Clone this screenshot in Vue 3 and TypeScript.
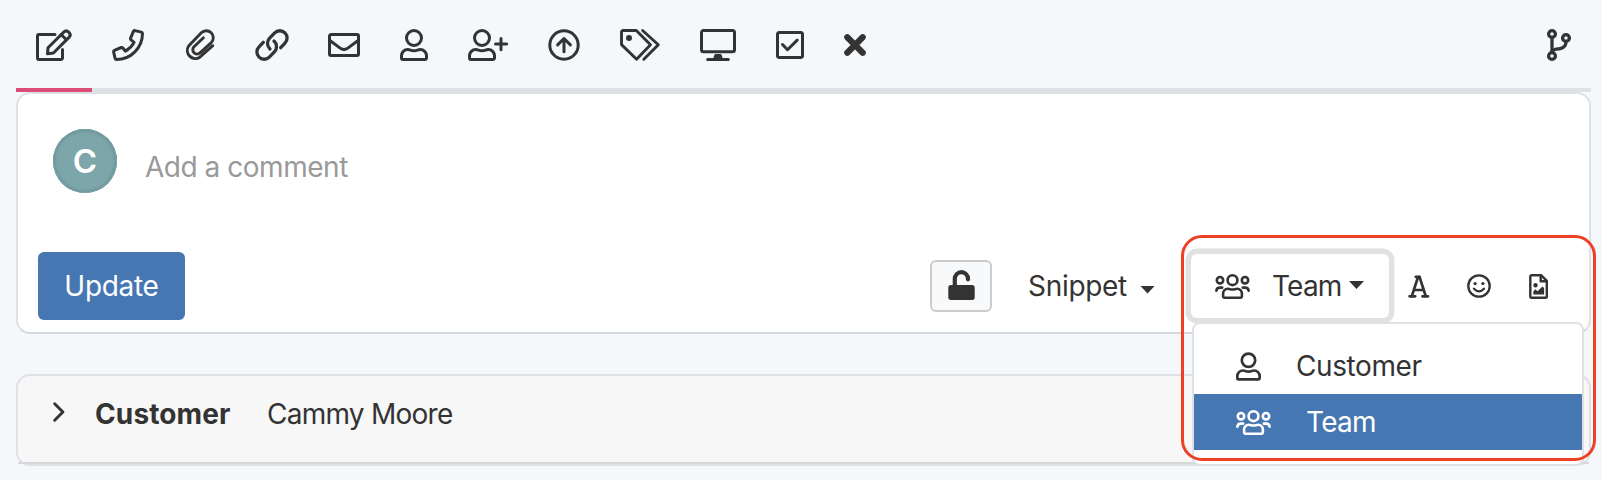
<script setup lang="ts">
import { ref } from 'vue'

interface Glyph {
  w: number
  h: number
  sw: number
  lines: string[]
  fills?: string[]
}

const circle = (cx: number, cy: number, r: number): string =>
  `M${cx - r} ${cy}a${r} ${r} 0 1 0 ${2 * r} 0a${r} ${r} 0 1 0 ${-2 * r} 0z`

const userBody =
  'M7.8 20.5c2.5 0 3 1.2 6.2 1.2s3.7-1.2 6.2-1.2a6.3 6.3 0 0 1 6.3 6.3V29a1.5 1.5 0 0 1-1.5 1.5H3A1.5 1.5 0 0 1 1.5 29v-2.2a6.3 6.3 0 0 1 6.3-6.3z'

const tools: Record<string, Glyph> = {
  edit: {
    w: 36, h: 32, sw: 3,
    lines: [
      'M19 5.5H3A1.5 1.5 0 0 0 1.5 7v22A1.5 1.5 0 0 0 3 30.5h22a1.5 1.5 0 0 0 1.5-1.5v-8.5',
      'M12 18.8 28 2.9a3.2 3.2 0 0 1 4.4 0l.8.8a3.2 3.2 0 0 1 0 4.4L17.4 24l-5.9.7z',
      'M25.3 5.7l5.1 5.1',
    ],
  },
  phone: {
    w: 32, h: 32, sw: 3,
    lines: [
      'M22.9 1.6l6.5 1.5q1.1.3 1.1 1.5A26 26 0 0 1 4.6 30.5q-1.2 0-1.5-1.1L1.6 22.9q-.2-1.1.8-1.5l6.9-2.9q.8-.3 1.4.3l2.7 3.3a21 21 0 0 0 8.7-8.7l-3.3-2.7q-.6-.6-.3-1.4l2.9-6.9q.4-1 1.5-.8z',
    ],
  },
  attach: {
    w: 32, h: 32, sw: 2.9,
    lines: [
      'M28.8 16.7 15.8 28.2A8.1 8.1 0 0 1 4.6 17L17.3 3.8a7 7 0 0 1 10 9.8L16 23.8a4.2 4.2 0 0 1-6-6l9.4-9',
    ],
  },
  link: {
    w: 32, h: 32, sw: 3.3,
    lines: [
      'M14 20a7.6 7.6 0 0 1-.6-10.7l5.3-5.4a7.2 7.2 0 0 1 10.3 10.2l-4.3 4.6',
      'M18 12a7.6 7.6 0 0 1 .6 10.7l-5.3 5.4A7.2 7.2 0 0 1 3 17.9l4.3-4.6',
    ],
  },
  mail: {
    w: 32, h: 24, sw: 3,
    lines: [
      'M3 1.5h26A1.5 1.5 0 0 1 30.5 3v18a1.5 1.5 0 0 1-1.5 1.5H3A1.5 1.5 0 0 1 1.5 21V3A1.5 1.5 0 0 1 3 1.5z',
      'M1.5 7.2l11.4 8.4q3.1 2 6.2 0l11.4-8.4',
    ],
  },
  user: { w: 28, h: 32, sw: 3, lines: [circle(14, 9, 7.5), userBody] },
  userAdd: { w: 40, h: 32, sw: 3, lines: [circle(14, 9, 7.5), userBody, 'M33 9.5v11.2M27.5 15.1h11.2'] },
  escalate: {
    w: 32, h: 32, sw: 3,
    lines: [circle(16, 16, 14.2), 'M16 22.7V10.5M9.6 15.9 16 9.5l6.4 6.4'],
  },
  tags: {
    w: 40, h: 32, sw: 2.9,
    lines: ['M3 1.5h13.3l14.2 14.3L16.6 30.3 1.5 15.6V3A1.5 1.5 0 0 1 3 1.5z', 'M22.6 1.5 38.3 15.8 23.8 30.3'],
    fills: [circle(9, 9, 3)],
  },
  screen: {
    w: 36, h: 32, sw: 3,
    lines: [
      'M3.5 1.5h29a2 2 0 0 1 2 2v17.3a2 2 0 0 1-2 2h-29a2 2 0 0 1-2-2V3.5a2 2 0 0 1 2-2z',
      'M7.7 30.5h20.6',
    ],
    fills: ['M15.5 25h5q1.5 0 2 4.5h-9q.5-4.5 2-4.5z'],
  },
  check: {
    w: 28, h: 28, sw: 3,
    lines: [
      'M3 1.5h22A1.5 1.5 0 0 1 26.5 3v22a1.5 1.5 0 0 1-1.5 1.5H3A1.5 1.5 0 0 1 1.5 25V3A1.5 1.5 0 0 1 3 1.5z',
      'M6.5 13.5l5 5.2 9.7-9.6',
    ],
  },
  close: { w: 22, h: 22, sw: 6.2, lines: ['M3.3 3.3l15.4 15.4M18.7 3.3 3.3 18.7'] },
}

const branch: Glyph = {
  w: 24, h: 32, sw: 3.3,
  lines: [circle(5, 5, 3.4), circle(5, 27, 3.4), circle(19, 9, 3.4), 'M5 8.5v15', 'M19 12.5c0 5-2.5 6.5-6 7.1s-7.5.7-8 3'],
}

const lock: Glyph = {
  w: 27, h: 30, sw: 4.2,
  lines: ['M6.8 17V8.8a6.6 6.6 0 0 1 13.2 0V9.3'],
  fills: ['M3 15h21a2.7 2.7 0 0 1 2.7 2.7v9.5a2.7 2.7 0 0 1-2.7 2.7H3a2.7 2.7 0 0 1-2.7-2.7v-9.5A2.7 2.7 0 0 1 3 15z'],
}

const team: Glyph = {
  w: 35, h: 25, sw: 2.6,
  lines: [
    circle(17.5, 6.2, 4.9), circle(5, 6.2, 3.2), circle(30, 6.2, 3.2),
    'M12.8 14.8c2 0 2.5.7 4.7.7s2.7-.7 4.7-.7a4.7 4.7 0 0 1 4.7 4.7v2.8a1.4 1.4 0 0 1-1.4 1.4h-16a1.4 1.4 0 0 1-1.4-1.4v-2.8a4.7 4.7 0 0 1 4.7-4.7z',
    'M1.3 16.8a3.7 3.7 0 0 1 3.7-3.2h2.2M33.7 16.8a3.7 3.7 0 0 0-3.7-3.2h-2.2',
  ],
}

const font: Glyph = {
  w: 22, h: 23, sw: 2.7,
  lines: ['M1.6 21.3h5.6M14.4 21.3h5.6M6.3 15h9', 'M3.9 21 10 2.2h1.6L17.7 21', 'M7.8 1.9h3.6'],
}

const smile: Glyph = {
  w: 24, h: 24, sw: 2.3,
  lines: [circle(12, 12, 10.7), 'M7 14.7q5 5.3 10 0'],
  fills: [circle(8.1, 9.6, 1.6), circle(15.9, 9.6, 1.6)],
}

const file: Glyph = {
  w: 19, h: 25, sw: 2.4,
  lines: [
    'M2.6 1.3h9.7l5.5 5.5v15.6a1.3 1.3 0 0 1-1.3 1.3H2.6a1.3 1.3 0 0 1-1.3-1.3V2.6a1.3 1.3 0 0 1 1.3-1.3z',
    'M11.7 1.5v5.8h5.8',
  ],
  fills: [circle(6.5, 11.3, 2.2), 'M4.3 20.5v-3l2.1-2.2 2.1 2 5-4.8 1.6 1.6v6.4z'],
}

const active = ref<string>('edit')
const audience = ref<string>('Team')
const options = [
  { label: 'Customer', glyph: tools.user },
  { label: 'Team', glyph: team },
]
const insertTools: Record<string, Glyph> = { font, smile, file }
</script>

<template>
  <main class="page">
    <nav class="toolbar">
      <button
        v-for="(g, name) in tools" :key="name"
        class="tool" :class="{ active: active === name }" @click="active = String(name)"
      >
        <svg :width="g.w" :height="g.h" :viewBox="`0 0 ${g.w} ${g.h}`" :stroke-width="g.sw">
          <path v-for="d in g.lines" :key="d" :d="d" />
          <path v-for="d in g.fills" :key="d" class="solid" :d="d" />
        </svg>
      </button>
      <button class="tool last">
        <svg :width="branch.w" :height="branch.h" :viewBox="`0 0 ${branch.w} ${branch.h}`" :stroke-width="branch.sw">
          <path v-for="d in branch.lines" :key="d" :d="d" />
        </svg>
      </button>
    </nav>

    <section class="composer">
      <div class="entry">
        <span class="avatar">C</span>
        <span class="placeholder">Add a comment</span>
      </div>
      <div class="actions">
        <button class="update"><span>Update</span></button>
        <button class="lock">
          <svg width="27" height="30" viewBox="0 0 27 30" :stroke-width="lock.sw">
            <path v-for="d in lock.lines" :key="d" :d="d" />
            <path v-for="d in lock.fills" :key="d" class="solid" :d="d" />
          </svg>
        </button>
        <button class="snippet"><span>Snippet</span><i class="caret"></i></button>
        <div class="audience">
          <button class="toggle">
            <svg width="35" height="25" viewBox="0 0 35 25" :stroke-width="team.sw">
              <path v-for="d in team.lines" :key="d" :d="d" />
            </svg>
            <span class="team-text">{{ audience }}</span><i class="caret"></i>
          </button>
          <ul class="menu">
            <li
              v-for="o in options" :key="o.label"
              :class="[o.label.toLowerCase(), { selected: o.label === audience }]" @click="audience = o.label"
            >
              <svg :viewBox="`0 0 ${o.glyph.w} ${o.glyph.h}`" :stroke-width="o.glyph.sw">
                <path v-for="d in o.glyph.lines" :key="d" :d="d" />
              </svg>
              <span>{{ o.label }}</span>
            </li>
          </ul>
        </div>
        <div class="inserts">
          <svg
            v-for="(g, name) in insertTools" :key="name" :class="name"
            :width="g.w" :height="g.h" :viewBox="`0 0 ${g.w} ${g.h}`" :stroke-width="g.sw"
          >
            <path v-for="d in g.lines" :key="d" :d="d" />
            <path v-for="d in g.fills" :key="d" class="solid" :d="d" />
          </svg>
        </div>
      </div>
    </section>

    <section class="event">
      <svg class="chevron" width="12" height="20" viewBox="0 0 12 20" stroke-width="3">
        <path d="M1.7 1.8 9.9 10l-8.2 8.2" />
      </svg>
      <b>Customer</b>
      <span class="name">Cammy Moore</span>
    </section>
    <div class="highlight"></div>
  </main>
</template>

<style>
body {
  background: #f4f8fb;
}
</style>

<style scoped>
* {
  box-sizing: border-box;
}
.page {
  position: relative;
  height: 480px;
  overflow: hidden;
  padding: 0 11px 0 16px;
  background: #f4f8fb;
  color: #333;
  font: 400 28px/34px Inter, "Liberation Sans", sans-serif;
}
button {
  margin: 0;
  padding: 0;
  border: 0;
  background: none;
  color: inherit;
  font: inherit;
}
svg {
  display: block;
  flex: none;
  overflow: visible;
  fill: none;
  stroke: currentColor;
  stroke-linecap: round;
  stroke-linejoin: round;
}
.solid {
  fill: currentColor;
  stroke: none;
}
span,
b {
  white-space: nowrap;
}
.toolbar {
  display: flex;
  height: 92px;
  border-bottom: 4px solid #dee2e6;
}
.tool {
  display: flex;
  align-items: center;
  height: 92px;
  padding: 4px 20px 2px;
  border-bottom: 4px solid transparent;
}
.tool.active {
  border-bottom-color: #db4c77;
}
.last {
  margin-left: auto;
}
.composer {
  height: 242px;
  padding: 35px 35px 0 20px;
  border: 2px solid #dee2e6;
  border-bottom-color: #d5d9dd;
  border-radius: 14px;
  background: #fff;
}
.entry {
  display: flex;
  height: 123px;
  padding-left: 15px;
  gap: 28px;
}
.avatar {
  width: 64px;
  height: 64px;
  border-radius: 50%;
  background: #7da6aa;
  box-shadow: inset 0 0 0 1px #7da6aa, inset 0 0 3px 2px #688f94;
  color: #fff;
  font-size: 33px;
  font-weight: 600;
  line-height: 64px;
  text-align: center;
}
.placeholder {
  padding-top: 21px;
  color: #999;
  letter-spacing: -0.47px;
}
.actions {
  display: flex;
  align-items: center;
  height: 68px;
}
.update {
  width: 147px;
  height: 68px;
  margin-right: auto;
  border-radius: 6px;
  background: #4677b3;
  color: #fff;
  letter-spacing: -0.3px;
}
.lock {
  display: grid;
  place-items: center;
  width: 62px;
  height: 52px;
  margin-right: 36px;
  padding-bottom: 2px;
  border: 2px solid #ccc;
  border-radius: 6px;
  background: #f8f9fb;
}
.snippet {
  display: flex;
  align-items: center;
  justify-content: space-between;
  width: 127px;
  margin-right: 36px;
  letter-spacing: -0.3px;
}
.caret {
  width: 15px;
  height: 8px;
  background: currentColor;
  clip-path: polygon(0 0, 100% 0, 50% 100%);
}
.snippet .caret {
  margin-top: 7px;
}
.audience {
  position: relative;
  width: 198px;
  margin-right: 19px;
}
.toggle {
  display: flex;
  align-items: center;
  width: 198px;
  height: 64px;
  border-radius: 6px;
  background: #fff;
  box-shadow: 0 0 0 5.4px #e1e1e1;
  padding-left: 24px;
}
.toggle .team-text {
  width: 77px;
  margin-left: 22px;
  text-align: left;
  letter-spacing: -0.8px;
}
.toggle .caret {
  margin-bottom: 2px;
}
.menu {
  position: absolute;
  top: 68px;
  left: 1px;
  z-index: 1;
  width: 392px;
  height: 144px;
  margin: 0;
  padding: 14px 0;
  border: 2px solid #dee2e6;
  border-radius: 8px;
  background: #fff;
  list-style: none;
}
.menu li {
  display: flex;
  align-items: center;
  height: 56px;
  padding-left: 42px;
}
.menu svg {
  width: 35px;
  height: 25px;
}
.menu .customer svg {
  width: 25px;
  height: 29px;
}
.customer span {
  margin-left: 35px;
  letter-spacing: -0.4px;
}
.team span {
  margin-left: 35px;
  letter-spacing: -0.7px;
}
.menu .selected {
  background: #4677b3;
  color: #fff;
}
.inserts {
  display: flex;
  align-items: center;
  gap: 38px;
  margin-right: 6px;
}
.inserts .font {
  margin-right: -1px;
}
.event {
  position: relative;
  display: flex;
  align-items: flex-start;
  height: 92px;
  margin-top: 40px;
  padding: 21px 35px 0;
  border: 2px solid #dee2e6;
  border-radius: 14px;
  background: #f7f7f7;
}
.event::after {
  content: "";
  position: absolute;
  right: 0;
  bottom: 0;
  left: 0;
  height: 2px;
  background: #d6d8db;
}
.chevron {
  margin: 5px 30px 0 0;
}
.event b {
  width: 172px;
  font-weight: 700;
  letter-spacing: 0.12px;
}
.name {
  letter-spacing: -0.75px;
}
.highlight {
  position: absolute;
  top: 235px;
  left: 1181px;
  z-index: 2;
  width: 415px;
  height: 226px;
  border: 3px solid #ed4027;
  border-radius: 21px;
  pointer-events: none;
}
</style>
